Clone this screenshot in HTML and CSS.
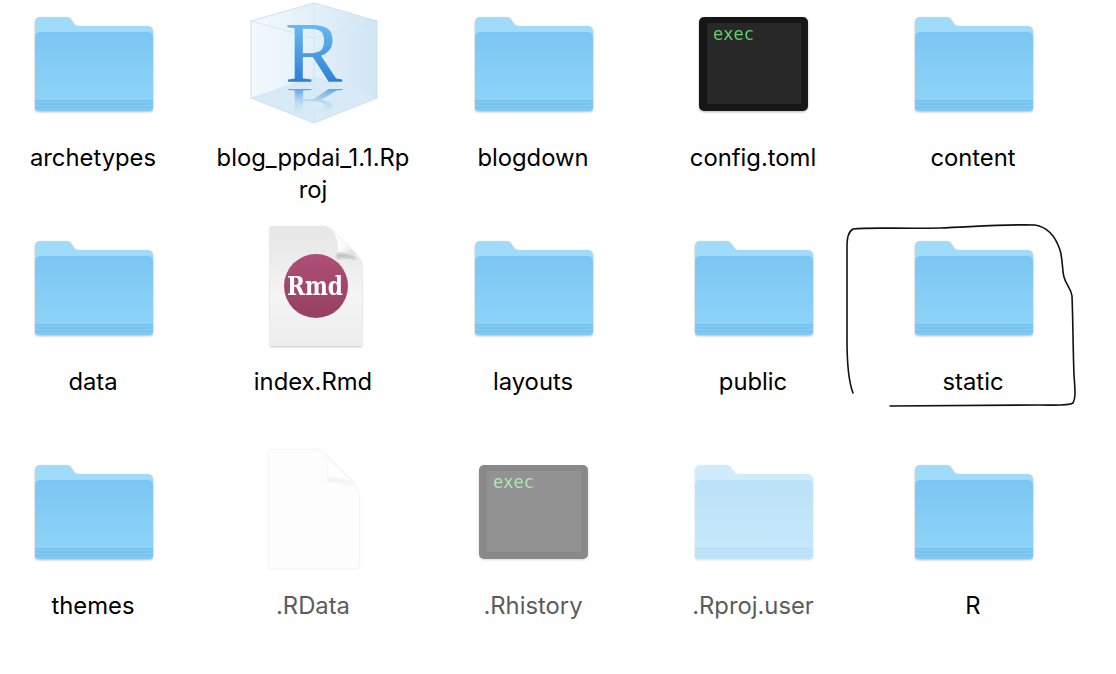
FILE: index.html
```html
<!DOCTYPE html>
<html lang="en">
<head>
    <meta charset="UTF-8">
    <meta name="viewport" content="width=device-width, initial-scale=1.0">
    <title>blog_ppdai_1.1</title>
    <link rel="stylesheet" href="styles.css">
</head>
<body>

<svg class="defs" width="0" height="0" aria-hidden="true">
    <defs>
        <linearGradient id="folderFront" x1="0" y1="0" x2="0" y2="1">
            <stop offset="0" stop-color="#7ac6f2"/>
            <stop offset="1" stop-color="#90d5f9"/>
        </linearGradient>
        <linearGradient id="rFill" gradientUnits="userSpaceOnUse" x1="0" y1="25" x2="0" y2="82">
            <stop offset="0" stop-color="#68b8f0"/>
            <stop offset="1" stop-color="#2f7fd6"/>
        </linearGradient>
        <linearGradient id="rShadow" gradientUnits="userSpaceOnUse" x1="0" y1="82" x2="0" y2="25">
            <stop offset="0" stop-color="#4f9fe4" stop-opacity=".9"/>
            <stop offset=".6" stop-color="#8cc4ee" stop-opacity=".35"/>
            <stop offset="1" stop-color="#8cc4ee" stop-opacity="0"/>
        </linearGradient>
        <linearGradient id="cubeLeft" x1="0" y1="0" x2="1" y2="0">
            <stop offset="0" stop-color="#f3f9fd"/>
            <stop offset="1" stop-color="#e2f0f9"/>
        </linearGradient>
        <linearGradient id="cubeRight" x1="0" y1="0" x2="1" y2="0">
            <stop offset="0" stop-color="#e3f0f9"/>
            <stop offset="1" stop-color="#d0e5f4"/>
        </linearGradient>
        <linearGradient id="rmdPage" x1="0" y1="0" x2="0" y2="1">
            <stop offset="0" stop-color="#e6e6e6"/>
            <stop offset=".6" stop-color="#f4f4f4"/>
            <stop offset="1" stop-color="#ededed"/>
        </linearGradient>
        <linearGradient id="rmdFold" x1="0" y1="0" x2="1" y2="1">
            <stop offset="0" stop-color="#ffffff"/>
            <stop offset=".55" stop-color="#fbfbfb"/>
            <stop offset="1" stop-color="#d2d2d2"/>
        </linearGradient>
        <linearGradient id="rmdBadge" x1="0" y1="0" x2="0" y2="1">
            <stop offset="0" stop-color="#b04e78"/>
            <stop offset="1" stop-color="#96405f"/>
        </linearGradient>

        <symbol id="folder" viewBox="0 0 128 128">
            <path d="M6 22a5 5 0 0 1 5-5h26c3 0 4.500 1 6 3.500 1.500 2.500 3 5.500 6 5.500h70a5 5 0 0 1 5 5v40H6z" fill="#a1dbfc"/>
            <path d="M6 37a5 5 0 0 1 5-5h108a5 5 0 0 1 5 5v70a4 4 0 0 1-4 4H10a4 4 0 0 1-4-4z" fill="url(#folderFront)"/>
            <path d="M6 100h118v7a4 4 0 0 1-4 4H10a4 4 0 0 1-4-4z" fill="#80c9f3"/>
            <path d="M6 100.500h118M6 104h118M6 107.500h118" stroke="#74c0ec" stroke-width="1" fill="none"/>
        </symbol>

        <symbol id="exec" viewBox="0 0 128 128">
            <rect x="10" y="17" width="109" height="94" rx="5" fill="#161616"/>
            <rect x="18" y="23" width="94" height="81" fill="#282828"/>
            <text class="exec-text" x="24" y="40">exec</text>
        </symbol>
    </defs>
</svg>

<div class="grid">
    <div class="item">
        <svg class="icon folder-icon" viewBox="0 0 128 128"><use href="#folder"/></svg>
        <div class="label">archetypes</div>
    </div>
    <div class="item">
        <svg class="icon" viewBox="0 0 128 128">
            <path d="M2 21L65 3v74L2 98z" fill="url(#cubeLeft)"/>
            <path d="M65 3l63 18v77L65 77z" fill="url(#cubeRight)"/>
            <path d="M2 98l63-21 63 21-63 25z" fill="#d8eaf6"/>
            <path d="M2 21l63 17v85M128 21L65 38M2 98l63-21 63 21M65 3v74" fill="none" stroke="#d2e7f4" stroke-width="1"/>
            <path d="M2 21L65 3l63 18v77l-63 25-63-25z" fill="none" stroke="#c8e2f2" stroke-width="1"/>
            <text class="r-mark" x="36" y="82">R</text>
            <text class="r-mark r-shadow" transform="translate(0 123.400) scale(1 -0.420)" x="36" y="82">R</text>
        </svg>
        <div class="label">blog_ppdai_1.1.Rproj</div>
    </div>
    <div class="item">
        <svg class="icon folder-icon" viewBox="0 0 128 128"><use href="#folder"/></svg>
        <div class="label">blogdown</div>
    </div>
    <div class="item">
        <svg class="icon folder-icon" viewBox="0 0 128 128"><use href="#exec"/></svg>
        <div class="label">config.toml</div>
    </div>
    <div class="item">
        <svg class="icon folder-icon" viewBox="0 0 128 128"><use href="#folder"/></svg>
        <div class="label">content</div>
    </div>

    <div class="item">
        <svg class="icon folder-icon" viewBox="0 0 128 128"><use href="#folder"/></svg>
        <div class="label">data</div>
    </div>
    <div class="item">
        <svg class="icon page-icon" viewBox="0 0 128 128">
            <path d="M21 2h53c4 0 6 1 9 4l26 26c3 3 4 6 4 10v80H21z" fill="url(#rmdPage)"/>
            <path class="fold-shadow" d="M88 29c6 0 12 1 17 3l3 4c-7-2-14-2-21-1z" fill="#c4c4c4"/>
            <path d="M84 7l24 24c-5-2-12-3-19-3 0-6 0-14-5-21z" fill="url(#rmdFold)"/>
            <circle cx="67" cy="62" r="32" fill="url(#rmdBadge)"/>
            <text class="rmd-text" x="38" y="71" textLength="56" lengthAdjust="spacingAndGlyphs">Rmd</text>
        </svg>
        <div class="label">index.Rmd</div>
    </div>
    <div class="item">
        <svg class="icon folder-icon" viewBox="0 0 128 128"><use href="#folder"/></svg>
        <div class="label">layouts</div>
    </div>
    <div class="item">
        <svg class="icon folder-icon" viewBox="0 0 128 128"><use href="#folder"/></svg>
        <div class="label">public</div>
    </div>
    <div class="item">
        <svg class="icon folder-icon" viewBox="0 0 128 128"><use href="#folder"/></svg>
        <div class="label">static</div>
    </div>

    <div class="item">
        <svg class="icon folder-icon" viewBox="0 0 128 128"><use href="#folder"/></svg>
        <div class="label">themes</div>
    </div>
    <div class="item">
        <svg class="icon page-icon blank" viewBox="0 0 128 128">
            <path d="M20 2h46c5 0 8 1 11 5l29 31c3 4 4 8 4 13v69H20z" fill="#fdfdfd"/>
            <path class="fold-shadow" d="M79 30c8 0 16 2 22 4l2 4c-8-3-17-5-25-4z" fill="#f0f0f0"/>
            <path d="M74 7l30 27c-8-3-17-5-25-5 0-7-1-15-5-22z" fill="#fff" stroke="#f2f2f2" stroke-width=".6"/>
        </svg>
        <div class="label dim">.RData</div>
    </div>
    <div class="item">
        <svg class="icon folder-icon faded" viewBox="0 0 128 128"><use href="#exec"/></svg>
        <div class="label dim">.Rhistory</div>
    </div>
    <div class="item">
        <svg class="icon folder-icon faded" viewBox="0 0 128 128"><use href="#folder"/></svg>
        <div class="label dim">.Rproj.user</div>
    </div>
    <div class="item">
        <svg class="icon folder-icon" viewBox="0 0 128 128"><use href="#folder"/></svg>
        <div class="label">R</div>
    </div>
</div>

<!-- hand drawn circle around static -->
<svg class="scribble" width="1116" height="674" viewBox="0 0 1116 674" aria-hidden="true">
    <path d="M853 393C848 380 847 360 847 340L847 248C847 238 848 232 853 229C870 227 900 229 940 228C970 227 1005 224 1035 225C1048 227 1056 238 1060 250C1063 260 1062 270 1064 277C1066 285 1071 288 1072 296C1073 320 1073 350 1074 375C1075 390 1076 398 1073 403C1068 406 1055 405 1040 405L890 406" fill="none" stroke="#111" stroke-width="1.600" stroke-linecap="round"/>
</svg>

</body>
</html>
```

FILE: styles.css
```css
* { margin: 0; padding: 0; box-sizing: border-box; }
html, body { height: 100%; background: #fff; overflow: hidden; }
body { position: relative; font-family: 'Inter', 'Liberation Sans', sans-serif; color: #000; }

.defs { display: block; height: 0; }

.grid {
    display: grid;
    grid-template-columns: repeat(5, 220px);
    grid-auto-rows: 206px;
    row-gap: 18px;
    margin-left: -17px;
    width: 1100px;
}
.item { display: flex; flex-direction: column; align-items: center; }
.icon { display: block; width: 128px; height: 128px; flex: none; overflow: visible; }
.folder-icon { filter: drop-shadow(0 1px 1px rgba(0, 0, 0, 0.28)); }
.page-icon { filter: drop-shadow(0 1px 1px rgba(0, 0, 0, 0.22)); }
.page-icon.blank { filter: drop-shadow(0 0 1px rgba(0, 0, 0, 0.12)); }
.fold-shadow { filter: blur(1px); }
.faded { opacity: 0.5; }

.label {
    width: 200px;
    margin-top: 14px;
    font-size: 23.8px;
    line-height: 32px;
    text-align: center;
    word-break: break-all;
}
.dim { color: #5c5c5c; }

.exec-text { font-family: 'DejaVu Sans Mono', monospace; font-size: 17px; fill: #62d26c; }
.r-mark { font-family: 'Liberation Serif', serif; font-size: 86px; fill: url(#rFill); }
.r-shadow { fill: url(#rShadow); }
.rmd-text { font-family: 'DejaVu Serif', serif; font-weight: bold; font-size: 25.5px; fill: #fff; }

.scribble { position: absolute; top: 0; left: 0; pointer-events: none; }
```
